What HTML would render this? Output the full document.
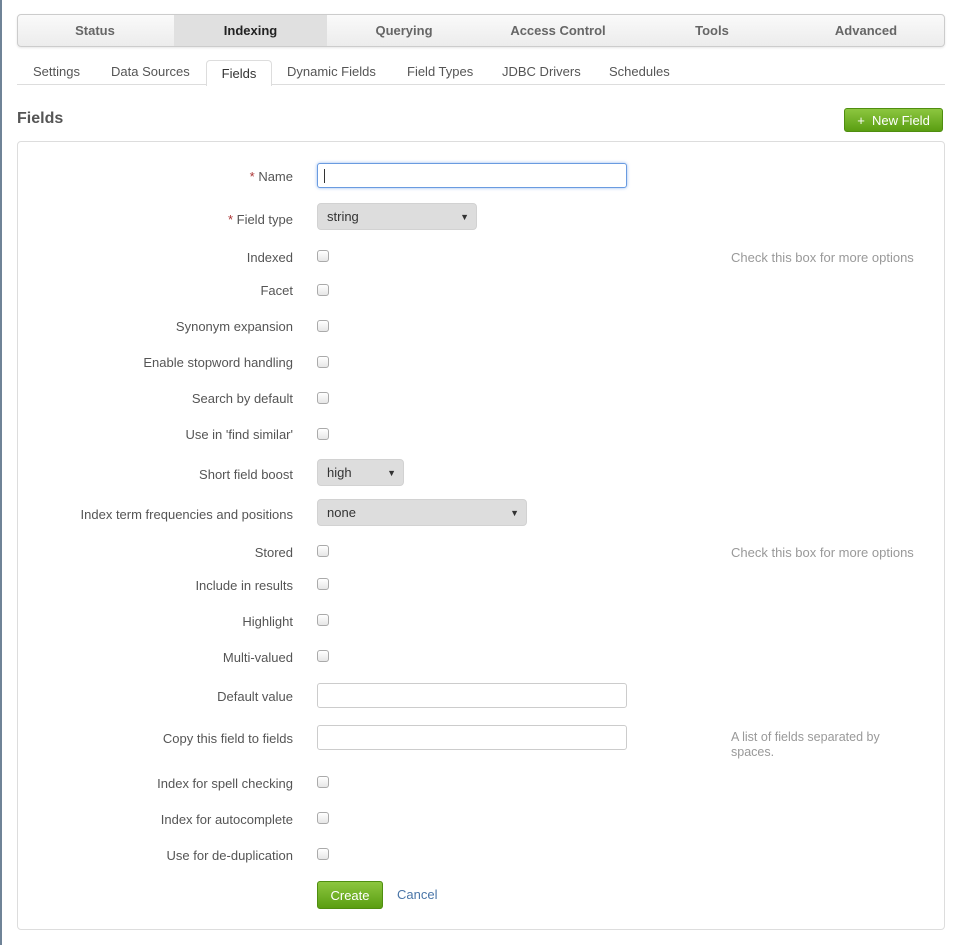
<!DOCTYPE html>
<html><head><meta charset="utf-8"><style>
*{box-sizing:border-box;margin:0;padding:0}
body{width:960px;height:945px;background:#fff;font-family:"Liberation Sans",Arial,sans-serif;font-size:13px;color:#555;position:relative;overflow:hidden}
.a{position:absolute}
.edge{left:0;top:0;width:2px;height:945px;background:#6f8397}
.nav{left:17px;top:14px;width:928px;height:33px;border:1px solid #ccc;border-radius:4px;background:linear-gradient(#fafafa,#ececec);box-shadow:0 1px 2px rgba(0,0,0,.1);overflow:hidden}
.nav div{position:absolute;top:0;height:31px;line-height:31px;text-align:center;font-weight:bold;font-size:13px;color:#666;width:154px}
.nav .on{background:#e0e0e0;color:#222}
.sub{top:60px;height:25px;line-height:24px;font-size:13px;color:#555}
.subline{left:17px;top:84px;width:928px;height:1px;background:#ddd}
.ftab{left:206px;top:60px;width:66px;height:26px;border:1px solid #ddd;border-bottom:none;border-radius:4px 4px 0 0;background:#fff;text-align:center;line-height:26px;color:#333}
h2{position:absolute;left:17px;top:110px;font-size:16px;font-weight:bold;color:#555}
.btn{background:linear-gradient(#8cc63f,#5a9e12);border:1px solid #4f8e10;border-radius:3px;color:#fff;text-align:center}
.panel{left:17px;top:141px;width:928px;height:789px;border:1px solid #ddd;border-radius:4px}
.lbl{right:667px;text-align:right;white-space:nowrap;color:#555;margin-top:1px}
.lbl b{color:#a33;font-weight:normal}
.cb{left:317px;width:12px;height:12px;border:1px solid #aaa;border-radius:3px;background:linear-gradient(#fff,#e6e6e6)}
.inp{left:317px;width:310px;height:25px;border:1px solid #ccc;border-radius:3px;background:#fff}
.sel{left:317px;height:27px;background:#ddd;border:1px solid #d2d2d2;border-radius:4px;padding-left:9px;line-height:26px;color:#333}
.sel span{position:absolute;right:7px;top:0;font-size:9px}
.help{left:731px;color:#999;font-size:13px;margin-top:1px}
</style></head><body>
<div class="a edge"></div>
<div class="a nav">
<div style="left:0">Status</div>
<div class="on" style="left:156px;width:153px">Indexing</div>
<div style="left:309px">Querying</div>
<div style="left:463px">Access Control</div>
<div style="left:617px">Tools</div>
<div style="left:771px">Advanced</div>
</div>
<div class="a subline"></div>
<div class="a sub" style="left:33px">Settings</div>
<div class="a sub" style="left:111px">Data Sources</div>
<div class="a ftab">Fields</div>
<div class="a sub" style="left:287px">Dynamic Fields</div>
<div class="a sub" style="left:407px">Field Types</div>
<div class="a sub" style="left:502px">JDBC Drivers</div>
<div class="a sub" style="left:609px">Schedules</div>
<h2>Fields</h2>
<div class="a btn" style="left:844px;top:108px;width:99px;height:24px;line-height:23px">+&nbsp; New Field</div>
<div class="a panel"></div>

<div class="a lbl" style="top:168px"><b>*</b> Name</div>
<div class="a inp" style="top:163px;border-color:#6a9be0;box-shadow:0 0 3px rgba(80,140,230,.6)"><div style="position:absolute;left:6px;top:5px;width:1px;height:14px;background:#333"></div></div>
<div class="a lbl" style="top:211px"><b>*</b> Field type</div>
<div class="a sel" style="top:203px;width:160px">string<span>▼</span></div>

<div class="a lbl" style="top:249px">Indexed</div><div class="a cb" style="top:250px"></div>
<div class="a help" style="top:249px">Check this box for more options</div>
<div class="a lbl" style="top:282px">Facet</div><div class="a cb" style="top:284px"></div>
<div class="a lbl" style="top:318px">Synonym expansion</div><div class="a cb" style="top:320px"></div>
<div class="a lbl" style="top:354px">Enable stopword handling</div><div class="a cb" style="top:356px"></div>
<div class="a lbl" style="top:390px">Search by default</div><div class="a cb" style="top:392px"></div>
<div class="a lbl" style="top:426px">Use in 'find similar'</div><div class="a cb" style="top:428px"></div>
<div class="a lbl" style="top:466px">Short field boost</div>
<div class="a sel" style="top:459px;width:87px">high<span>▼</span></div>
<div class="a lbl" style="top:506px">Index term frequencies and positions</div>
<div class="a sel" style="top:499px;width:210px">none<span>▼</span></div>
<div class="a lbl" style="top:544px">Stored</div><div class="a cb" style="top:545px"></div>
<div class="a help" style="top:544px">Check this box for more options</div>
<div class="a lbl" style="top:577px">Include in results</div><div class="a cb" style="top:578px"></div>
<div class="a lbl" style="top:613px">Highlight</div><div class="a cb" style="top:614px"></div>
<div class="a lbl" style="top:649px">Multi-valued</div><div class="a cb" style="top:650px"></div>
<div class="a lbl" style="top:688px">Default value</div>
<div class="a inp" style="top:683px"></div>
<div class="a lbl" style="top:730px">Copy this field to fields</div>
<div class="a inp" style="top:725px"></div>
<div class="a help" style="top:729px;width:190px;font-size:12.5px;line-height:15px">A list of fields separated by spaces.</div>
<div class="a lbl" style="top:775px">Index for spell checking</div><div class="a cb" style="top:776px"></div>
<div class="a lbl" style="top:811px">Index for autocomplete</div><div class="a cb" style="top:812px"></div>
<div class="a lbl" style="top:847px">Use for de-duplication</div><div class="a cb" style="top:848px"></div>
<div class="a btn" style="left:317px;top:881px;width:66px;height:28px;line-height:27px">Create</div>
<div class="a" style="left:397px;top:887px;color:#4a76a8">Cancel</div>
</body></html>
